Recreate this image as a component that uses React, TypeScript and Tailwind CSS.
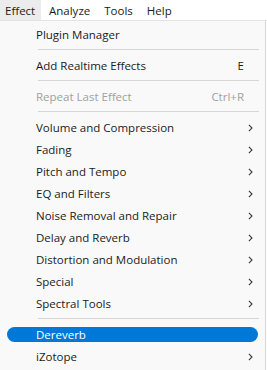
import React from 'react'

type Entry =
  | { kind: 'item'; label: string; hint?: string; sub?: boolean; disabled?: boolean; active?: boolean }
  | { kind: 'sep' }

const entries: Entry[] = [
  { kind: 'item', label: 'Plugin Manager' },
  { kind: 'sep' },
  { kind: 'item', label: 'Add Realtime Effects', hint: 'E' },
  { kind: 'sep' },
  { kind: 'item', label: 'Repeat Last Effect', hint: 'Ctrl+R', disabled: true },
  { kind: 'sep' },
  { kind: 'item', label: 'Volume and Compression', sub: true },
  { kind: 'item', label: 'Fading', sub: true },
  { kind: 'item', label: 'Pitch and Tempo', sub: true },
  { kind: 'item', label: 'EQ and Filters', sub: true },
  { kind: 'item', label: 'Noise Removal and Repair', sub: true },
  { kind: 'item', label: 'Delay and Reverb', sub: true },
  { kind: 'item', label: 'Distortion and Modulation', sub: true },
  { kind: 'item', label: 'Special', sub: true },
  { kind: 'item', label: 'Spectral Tools', sub: true },
  { kind: 'sep' },
  { kind: 'item', label: 'Dereverb', active: true },
  { kind: 'item', label: 'iZotope', sub: true },
]

function Chevron() {
  return (
    <svg width="5" height="8" viewBox="0 0 5 8" className="text-[#3a3a3a] -mr-[9px]">
      <path d="M0.9 0.9 L4 4 L0.9 7.1" fill="none" stroke="currentColor" strokeWidth="1.1" />
    </svg>
  )
}

function MenuRow({ entry }: { entry: Entry }) {
  if (entry.kind === 'sep') {
    return (
      <div className="h-[9px] pt-[4px] pl-[38px] pr-[6px]">
        <div className="h-px bg-[#d6d6d6]" />
      </div>
    )
  }
  return (
    <div className="h-[22px] flex items-center px-[7px]">
      <div
        className={
          'flex-1 h-[15px] flex items-center rounded-full pl-[29px] pr-[14px] pt-px ' +
          (entry.active ? 'bg-[#0078d7] text-white' : entry.disabled ? 'text-[#a0a0a0]' : 'text-[#1b1b1b]')
        }
      >
        <span className="flex-1">{entry.label}</span>
        {entry.hint && <span>{entry.hint}</span>}
        {entry.sub && <Chevron />}
      </div>
    </div>
  )
}

export default function App() {
  return (
    <div
      className="w-[267px] h-[370px] overflow-hidden bg-white text-[11.5px] leading-none"
      style={{ fontFamily: '"Open Sans", "Noto Sans", sans-serif' }}
    >
      <div className="h-[21px] flex items-stretch border-b border-[#e3e3e3] text-[#1b1b1b]">
        <div className="w-[41px] bg-[#ececec] flex items-center pl-[5px] pt-[2px]">Effect</div>
        <div className="flex items-center pl-[8px] pt-[2px]">Analyze</div>
        <div className="flex items-center pl-[14px] pt-[2px]">Tools</div>
        <div className="flex items-center pl-[14px] pt-[2px]">Help</div>
      </div>
      <div className="h-[349px] w-[266px] bg-[#f9f9f9] border-r border-[#d8d8d8] pt-[2px]">
        {entries.map((e, i) => (
          <MenuRow key={i} entry={e} />
        ))}
      </div>
    </div>
  )
}
